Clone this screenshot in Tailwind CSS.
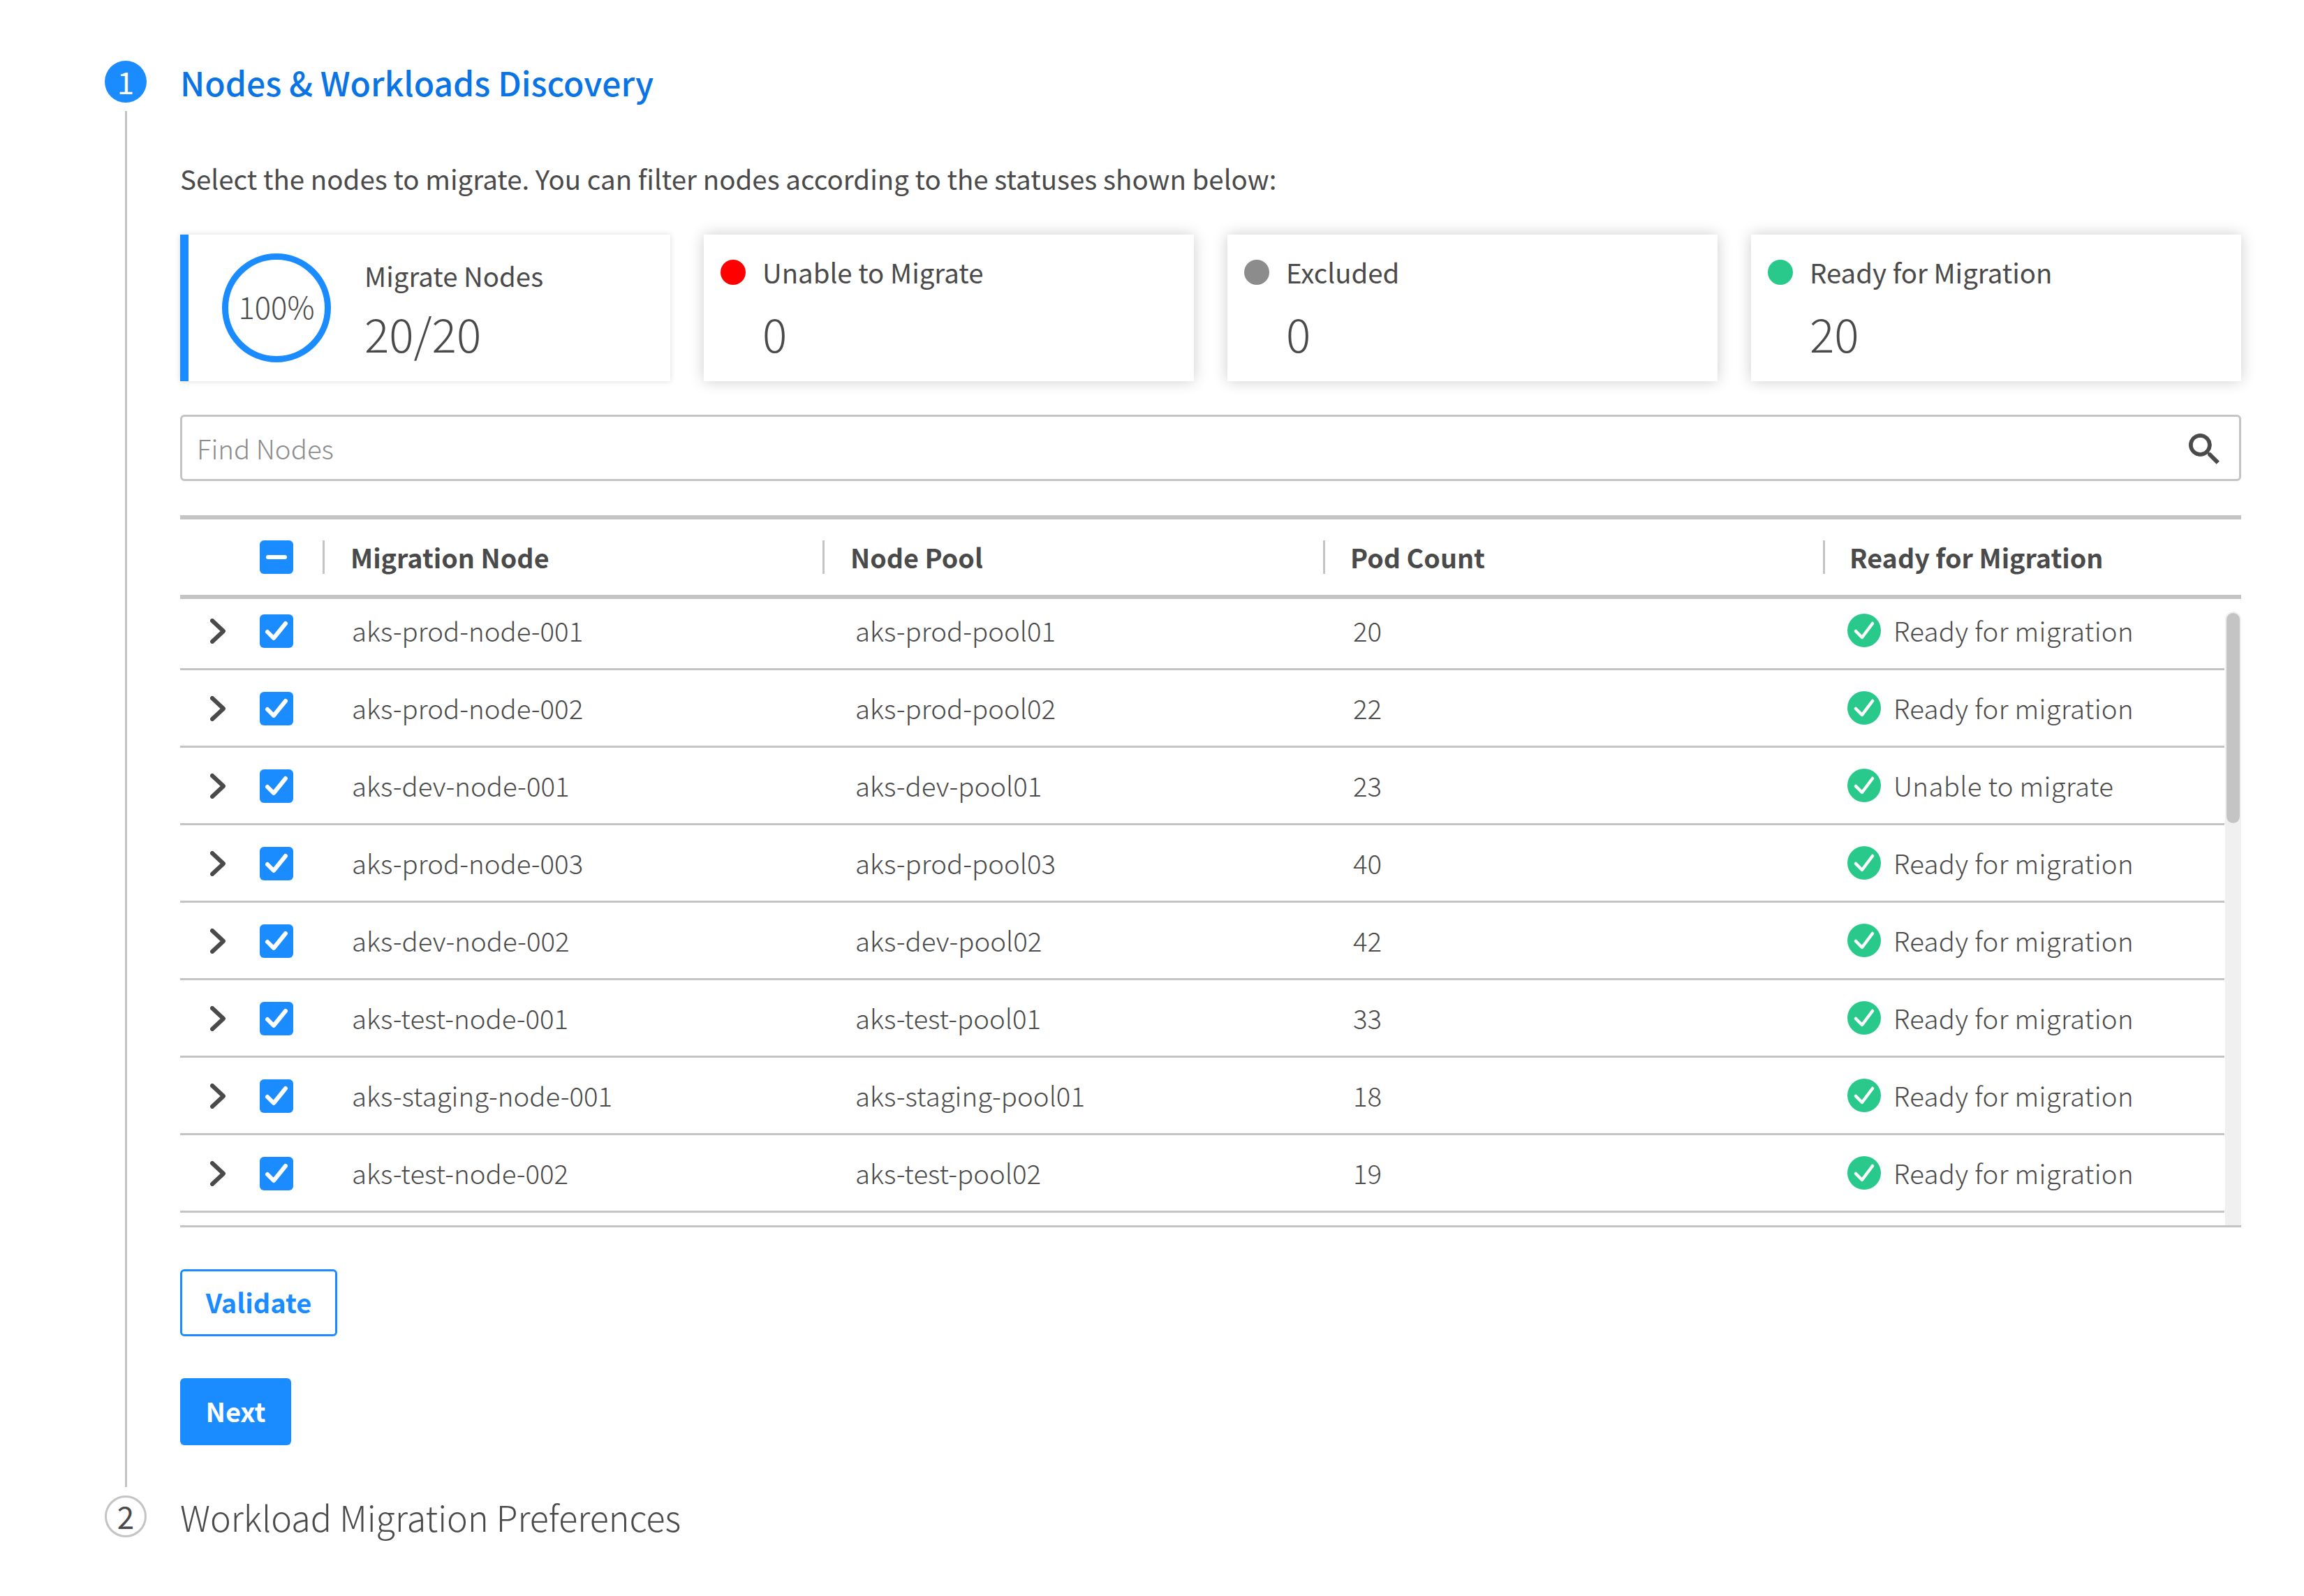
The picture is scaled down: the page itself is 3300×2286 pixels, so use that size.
<!DOCTYPE html>
<html lang="en">
<head>
<meta charset="UTF-8" />
<title>Nodes & Workloads Discovery</title>
<script src="https://cdn.jsdelivr.net/npm/@tailwindcss/browser@4"></script>
</head>
<body class="bg-white text-[#4a4a4a] font-['Noto_Sans_CJK_SC',sans-serif] w-[3300px] h-[2286px] overflow-hidden">
<div class="pt-[87px] pl-[150px] w-[3210px]">

  <!-- Step 1 -->
  <div class="flex items-center h-[60px]">
    <div class="w-[60px] h-[60px] rounded-full bg-[#1a8cff] text-white flex items-center justify-center text-[44px] font-normal pb-[2px]">1</div>
    <h1 class="ml-[48px] text-[48px] leading-[60px] font-medium text-[#0b74e5]">Nodes &amp; Workloads Discovery</h1>
  </div>

  <div class="ml-[29px] mt-[12px] h-[1971px] border-l-[3px] border-[#c4c4c4] pl-[76px]">
    <p class="pt-[66px] text-[38.5px] leading-[60px]">Select the nodes to migrate. You can filter nodes according to the statuses shown below:</p>

    <!-- Summary cards -->
    <div class="mt-[51px] grid grid-cols-4 gap-[48px] h-[210px]">
      <div class="flex items-center border-l-[12px] border-[#1a8cff] bg-white shadow-[0_0_8px_rgba(0,0,0,0.15)] pl-[48px]">
        <div class="w-[156px] h-[156px] rounded-full border-[9px] border-[#1a8cff] flex items-center justify-center text-[43.5px] font-light pb-[4px]">100%</div>
        <div class="ml-[48px]">
          <div class="text-[38.4px] leading-[60px]">Migrate Nodes</div>
          <div class="text-[66px] leading-[84px] font-light mt-[10px]">20/20</div>
        </div>
      </div>
      <div class="bg-white shadow-[0_0_20px_rgba(0,0,0,0.2)] pl-[24px] pt-[24px]">
        <div class="flex items-center h-[60px]"><span class="w-[36px] h-[36px] rounded-full bg-[#ff0000]"></span><span class="ml-[24px] text-[38.4px]">Unable to Migrate</span></div>
        <div class="ml-[60px] text-[66px] leading-[84px] font-light mt-[14px]">0</div>
      </div>
      <div class="bg-white shadow-[0_0_20px_rgba(0,0,0,0.2)] pl-[24px] pt-[24px]">
        <div class="flex items-center h-[60px]"><span class="w-[36px] h-[36px] rounded-full bg-[#8c8c8c]"></span><span class="ml-[24px] text-[38.4px]">Excluded</span></div>
        <div class="ml-[60px] text-[66px] leading-[84px] font-light mt-[14px]">0</div>
      </div>
      <div class="bg-white shadow-[0_0_20px_rgba(0,0,0,0.2)] pl-[24px] pt-[24px]">
        <div class="flex items-center h-[60px]"><span class="w-[36px] h-[36px] rounded-full bg-[#29c98b]"></span><span class="ml-[24px] text-[38.4px]">Ready for Migration</span></div>
        <div class="ml-[60px] text-[66px] leading-[84px] font-light mt-[14px]">20</div>
      </div>
    </div>

    <!-- Search -->
    <div class="mt-[48px] h-[95px] border-[3px] border-[#c4c4c4] rounded-[6px] flex items-center justify-between pl-[21px] pr-[20px]">
      <span class="text-[38.4px] font-light text-[#8c8c8c]">Find Nodes</span>
      <svg class="mt-[3px] w-[59px] h-[59px]" viewBox="0 0 24 24" fill="#4a4a4a" stroke="#4a4a4a" stroke-width="0.4" stroke-linejoin="round"><path d="M15.5 14h-.79l-.28-.27A6.47 6.47 0 0 0 16 9.5 6.5 6.5 0 1 0 9.5 16c1.61 0 3.09-.59 4.23-1.57l.27.28v.79l5 4.99L20.49 19l-4.99-5zm-6 0C7.01 14 5 11.99 5 9.5S7.01 5 9.5 5 14 7.01 14 9.5 11.99 14 9.5 14z"/></svg>
    </div>

    <!-- Table header -->
    <div class="mt-[49px] h-[120px] border-y-[6px] border-[#c4c4c4] grid grid-cols-[204px_716px_717px_716px_1fr] items-center text-[37.7px] font-bold">
      <div class="pl-[114px]">
        <span class="w-[48px] h-[48px] rounded-[6px] bg-[#1a8cff] flex items-center justify-center"><span class="w-[30px] h-[6px] rounded-full bg-white"></span></span>
      </div>
      <div class="border-l-[3px] border-[#c4c4c4] h-[48px] flex items-center pl-[37px]">Migration Node</div>
      <div class="border-l-[3px] border-[#c4c4c4] h-[48px] flex items-center pl-[37px]">Node Pool</div>
      <div class="border-l-[3px] border-[#c4c4c4] h-[48px] flex items-center pl-[36px]">Pod Count</div>
      <div class="border-l-[3px] border-[#c4c4c4] h-[48px] flex items-center pl-[35px]">Ready for Migration</div>
    </div>

    <!-- Table body -->
    <div id="rows" class="relative h-[900px] overflow-hidden border-b-[3px] border-[#c4c4c4]">
      <div class="absolute right-0 top-[18px] bottom-0 w-[23px] bg-[#f0f0f0] rounded-t-full">
        <div class="mx-auto mt-[2px] w-[19px] h-[301px] bg-[#c4c4c4] rounded-full"></div>
      </div>
      <div id="list" class="-mt-[9px] w-[2928px]"></div>
    </div>

    <!-- Buttons -->
    <button class="block mt-[60px] w-[225px] h-[96px] pb-[3px] border-[3px] border-[#1a8cff] rounded-[6px] text-[#1a8cff] text-[38px] font-bold">Validate</button>
    <button class="block mt-[60px] w-[159px] h-[96px] pb-[3px] bg-[#1a8cff] rounded-[6px] text-white text-[38px] font-bold">Next</button>
  </div>

  <!-- Step 2 -->
  <div class="flex items-center h-[60px] mt-[12px]">
    <div class="w-[60px] h-[60px] rounded-full border-[3px] border-[#c4c4c4] flex items-center justify-center text-[44px] pb-[2px]">2</div>
    <h2 class="ml-[48px] text-[50.2px] leading-[60px] font-light">Workload Migration Preferences</h2>
  </div>
</div>

<script>
  const nodes = [
    ['aks-prod-node-001', 'aks-prod-pool01', 20, 'Ready for migration'],
    ['aks-prod-node-002', 'aks-prod-pool02', 22, 'Ready for migration'],
    ['aks-dev-node-001', 'aks-dev-pool01', 23, 'Unable to migrate'],
    ['aks-prod-node-003', 'aks-prod-pool03', 40, 'Ready for migration'],
    ['aks-dev-node-002', 'aks-dev-pool02', 42, 'Ready for migration'],
    ['aks-test-node-001', 'aks-test-pool01', 33, 'Ready for migration'],
    ['aks-staging-node-001', 'aks-staging-pool01', 18, 'Ready for migration'],
    ['aks-test-node-002', 'aks-test-pool02', 19, 'Ready for migration'],
  ];

  document.getElementById('list').innerHTML = nodes.map(n => `
    <div class="h-[111px] border-b-[3px] border-[#c4c4c4] grid grid-cols-[114px_132px_721px_713px_708px_1fr] items-center text-[38.4px] font-light">
      <svg class="mt-[2px] ml-[43px] w-[22px] h-[36px]" viewBox="0 0 22 36" fill="none" stroke="#4a4a4a" stroke-width="6" stroke-linecap="round" stroke-linejoin="round"><path d="M3 3l16 15L3 33"/></svg>
      <span class="mt-[2px] w-[48px] h-[48px] rounded-[6px] bg-[#1a8cff] flex items-center justify-center">
        <svg class="w-[48px] h-[48px]" viewBox="0 0 48 48" fill="none" stroke="#fff" stroke-width="6" stroke-linecap="round" stroke-linejoin="round"><path d="M11 25l9 9 17-21"/></svg>
      </span>
      <div>${n[0]}</div>
      <div>${n[1]}</div>
      <div>${n[2]}</div>
      <div class="flex items-center">
        <svg class="w-[48px] h-[48px]" viewBox="0 0 48 48"><circle cx="24" cy="24" r="24" fill="#29c98b"/><path d="M12 25l9 9 15-20" fill="none" stroke="#fff" stroke-width="4.5" stroke-linecap="round" stroke-linejoin="round"/></svg>
        <span class="ml-[18px] tracking-[0.3px]">${n[3]}</span>
      </div>
    </div>`).join('');
</script>
</body>
</html>
